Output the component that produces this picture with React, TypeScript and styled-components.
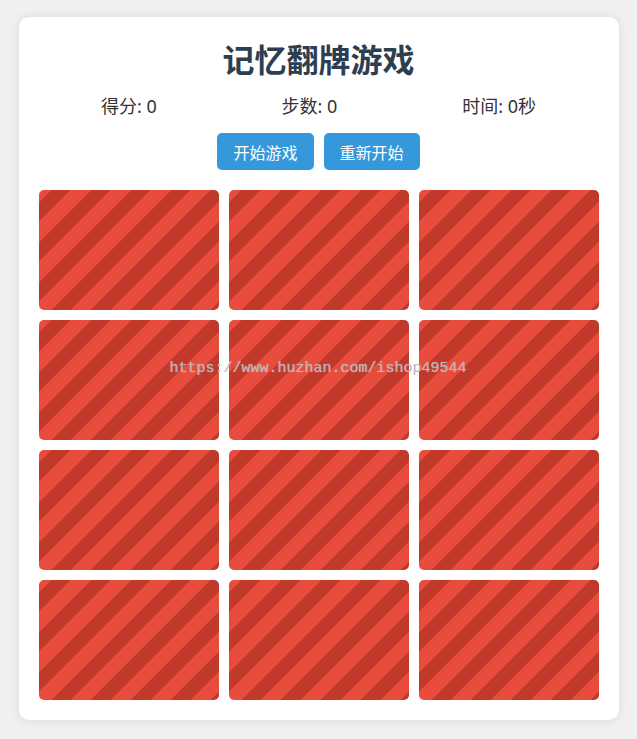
import styled, { createGlobalStyle } from 'styled-components'

const GlobalStyle = createGlobalStyle`
	* {
		box-sizing: border-box;
	}
	body {
		margin: 0;
		padding: 17px 0 20px;
		background: #f0f0f0;
		font-family: 'Noto Sans', 'Noto Sans CJK SC', sans-serif;
	}
`

const Container = styled.div`
	position: relative;
	width: 600px;
	margin: 0 auto;
	padding: 20px;
	background: #fff;
	border-radius: 10px;
	box-shadow: 0 0 10px rgba(0, 0, 0, 0.1);
`

const Title = styled.h1`
	margin: 0 0 10px;
	height: 46px;
	line-height: 46px;
	text-align: center;
	font-size: 32px;
	font-weight: 700;
	color: #2c3e50;
`

const Stats = styled.div`
	display: flex;
	justify-content: space-around;
	margin-bottom: 14px;
	font-size: 18px;
	line-height: 26px;
	color: #333;
`

const Controls = styled.div`
	display: flex;
	justify-content: center;
	gap: 10px;
	margin-bottom: 20px;
`

const Button = styled.button`
	height: 37px;
	padding: 0 16px;
	border: none;
	border-radius: 5px;
	background: #3498db;
	color: #fff;
	font-family: inherit;
	font-size: 16px;
	cursor: pointer;
`

const Board = styled.div`
	display: grid;
	grid-template-columns: repeat(3, 1fr);
	gap: 10px;
`

const Card = styled.div`
	height: 120px;
	border-radius: 5px;
	background: repeating-linear-gradient(
		135deg,
		#e74c3c 0,
		#e74c3c 8.5px,
		#c0392b 8.5px,
		#c0392b 22.6px,
		#e74c3c 22.6px,
		#e74c3c 28.28px
	);
	cursor: pointer;
`

const Watermark = styled.div`
	position: absolute;
	left: 151px;
	top: 343px;
	font-family: 'Liberation Mono', monospace;
	font-size: 15px;
	color: #b4b4b4;
	text-shadow: 0 0 1px rgba(255, 255, 255, 0.6);
	pointer-events: none;
	white-space: nowrap;
`

export default function App() {
	const cards = Array.from({ length: 12 }, (_, i) => i)

	return (
		<>
			<GlobalStyle />
			<Container>
				<Title>记忆翻牌游戏</Title>
				<Stats>
					<span>得分: 0</span>
					<span>步数: 0</span>
					<span>时间: 0秒</span>
				</Stats>
				<Controls>
					<Button>开始游戏</Button>
					<Button>重新开始</Button>
				</Controls>
				<Board>
					{cards.map((i) => (
						<Card key={i} />
					))}
				</Board>
				<Watermark>https://www.huzhan.com/ishop49544</Watermark>
			</Container>
		</>
	)
}
